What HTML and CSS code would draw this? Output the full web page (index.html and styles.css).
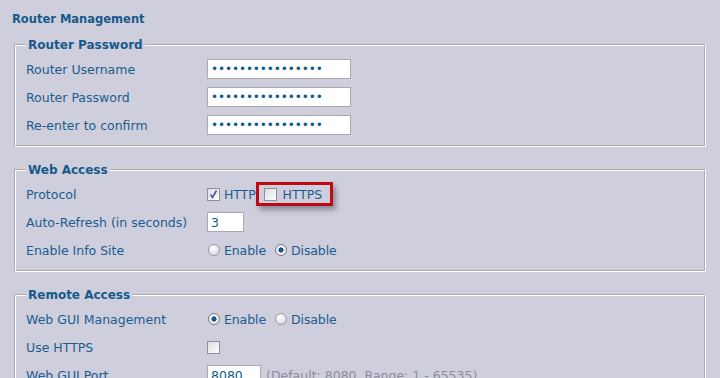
FILE: index.html
```html
<!DOCTYPE html>
<html>
<head>
<meta charset="utf-8">
<link rel="stylesheet" href="styles.css">
</head>
<body>
<div class="page">
  <h1 class="title">Router Management</h1>

  <fieldset class="box">
    <legend>Router Password</legend>
    <div class="row"><span class="lbl">Router Username</span><span class="ctl"><span class="txt pw">&#8226;&#8226;&#8226;&#8226;&#8226;&#8226;&#8226;&#8226;&#8226;&#8226;&#8226;&#8226;&#8226;&#8226;&#8226;&#8226;</span></span></div>
    <div class="row"><span class="lbl">Router Password</span><span class="ctl"><span class="txt pw">&#8226;&#8226;&#8226;&#8226;&#8226;&#8226;&#8226;&#8226;&#8226;&#8226;&#8226;&#8226;&#8226;&#8226;&#8226;&#8226;</span></span></div>
    <div class="row"><span class="lbl">Re-enter to confirm</span><span class="ctl"><span class="txt pw">&#8226;&#8226;&#8226;&#8226;&#8226;&#8226;&#8226;&#8226;&#8226;&#8226;&#8226;&#8226;&#8226;&#8226;&#8226;&#8226;</span></span></div>
  </fieldset>

  <fieldset class="box">
    <legend>Web Access</legend>
    <div class="row"><span class="lbl">Protocol</span>
      <span class="ctl">
        <span class="cb"><svg width="11" height="11" viewBox="0 0 11 11"><path d="M2.5 5.5 L4.5 8.5 L8.5 1.5" fill="none" stroke="#4b5a9a" stroke-width="1.6"/></svg></span><span class="opt">HTTP</span>
        <span class="mark"><span class="cb"></span><span class="opt">HTTPS</span></span>
      </span>
    </div>
    <div class="row"><span class="lbl">Auto-Refresh (in seconds)</span><span class="ctl"><span class="txt short">3</span></span></div>
    <div class="row"><span class="lbl">Enable Info Site</span>
      <span class="ctl"><span class="rb"></span><span class="opt">Enable</span><span class="rb on"></span><span class="opt">Disable</span></span>
    </div>
  </fieldset>

  <fieldset class="box">
    <legend>Remote Access</legend>
    <div class="row"><span class="lbl">Web GUI Management</span>
      <span class="ctl"><span class="rb on"></span><span class="opt">Enable</span><span class="rb"></span><span class="opt">Disable</span></span>
    </div>
    <div class="row"><span class="lbl">Use HTTPS</span><span class="ctl"><span class="cb"></span></span></div>
    <div class="row"><span class="lbl">Web GUI Port</span><span class="ctl"><span class="txt port">8080</span><span class="hint">(Default: 8080, Range: 1 - 65535)</span></span></div>
  </fieldset>
</div>
</body>
</html>
```

FILE: styles.css
```css
html, body {
  margin: 0;
  padding: 0;
  background: #cecedd;
  height: 378px;
  overflow: hidden;
}
body {
  font-family: "DejaVu Sans", Verdana, sans-serif;
  font-size: 12.5px;
  color: #1b5c8e;
}
.page {
  padding: 11px 0 0 12px;
}
.title {
  margin: 0;
  font-size: 11.5px;
  line-height: 16px;
  font-weight: bold;
  color: #175a8a;
}
.box {
  width: 692px;
  box-sizing: border-box;
  margin: 10px 0 15px 2px;
  padding: 2px 10px 6px 10px;
  border: 2px groove #ffffff;
}
.box + .box {
  margin-top: 0;
}
.box legend {
  padding: 0 2px;
  font-size: 12px;
  line-height: 16px;
  font-weight: bold;
  color: #175a8a;
}
.row {
  display: grid;
  grid-template-columns: 181px 1fr;
  align-items: center;
  height: 28px;
}
.lbl {
  white-space: nowrap;
}
.ctl {
  display: flex;
  align-items: center;
  white-space: nowrap;
}
.txt {
  display: inline-flex;
  align-items: center;
  box-sizing: border-box;
  height: 20px;
  background: #fff;
  border: 1px solid #a9a9b2;
  padding: 0 3px;
  color: #125b8c;
}
.pw {
  width: 144px;
  font-size: 12px;
  letter-spacing: -0.1px;
}
.short {
  width: 37px;
  height: 20px;
}
.port {
  width: 54px;
}
.hint {
  color: #8d8d9c;
  margin-left: 5px;
}
.cb {
  display: inline-flex;
  align-items: center;
  justify-content: center;
  width: 13px;
  height: 13px;
  box-sizing: border-box;
  border: 1px solid #8f8f99;
  background: linear-gradient(135deg, #dcdce2 0%, #f4f4f6 70%, #ffffff 100%);
}
.cb svg {
  display: block;
}
.opt {
  margin-left: 4px;
  letter-spacing: -0.1px;
}
.mark {
  display: inline-flex;
  align-items: center;
  margin-left: 0;
  height: 18px;
  padding: 0 8px 0 5px;
  border: 3px solid #bf0a14;
  box-shadow: 3px 4px 5px rgba(60, 60, 80, 0.45);
}
.mark .opt {
  margin-left: 6px;
}
.rb {
  display: inline-block;
  width: 12px;
  height: 12px;
  box-sizing: border-box;
  border-radius: 50%;
  border: 1px solid #9a9aa4;
  background: radial-gradient(circle at 40% 35%, #ffffff 0%, #e6e6ea 55%, #c8c8d0 100%);
  margin-left: 1px;
}
.opt + .rb {
  margin-left: 9px;
}
.rb.on {
  background: radial-gradient(circle at 50% 50%, #1a6fa8 0%, #0c4a78 30%, #0c4a78 32%, #f4f4f6 40%, #dcdce2 100%);
  border-color: #7d7d8a;
}
```
